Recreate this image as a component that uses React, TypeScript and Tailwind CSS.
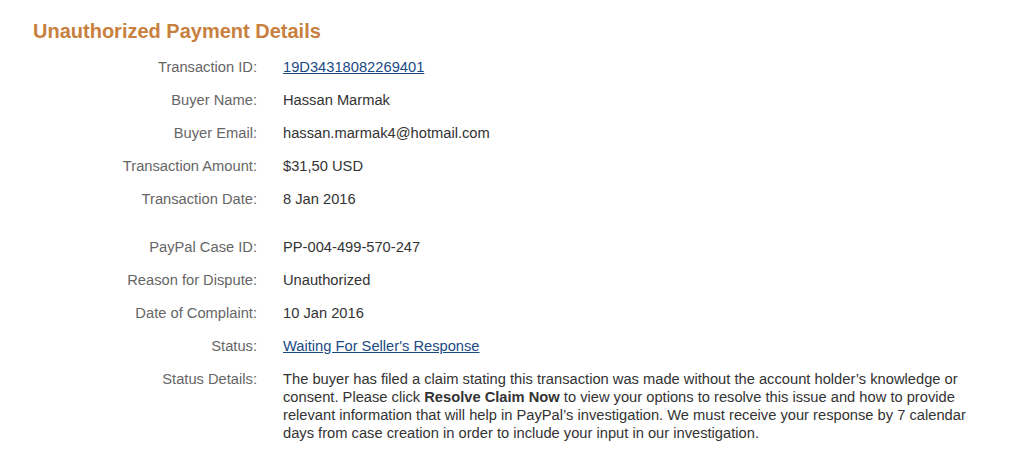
import React from "react";

const rows1: [string, React.ReactNode][] = [
  ["Transaction ID:", <a className="text-[#1a4a85] underline" href="#">19D34318082269401</a>],
  ["Buyer Name:", "Hassan Marmak"],
  ["Buyer Email:", "hassan.marmak4@hotmail.com"],
  ["Transaction Amount:", "$31,50 USD"],
  ["Transaction Date:", "8 Jan 2016"],
];

const rows2: [string, React.ReactNode][] = [
  ["PayPal Case ID:", "PP-004-499-570-247"],
  ["Reason for Dispute:", "Unauthorized"],
  ["Date of Complaint:", "10 Jan 2016"],
  ["Status:", <a className="text-[#1a4a85] underline" href="#">Waiting For Seller's Response</a>],
];

function Row({ label, value }: { label: string; value: React.ReactNode }) {
  return (
    <div className="flex items-start">
      <div className="w-[224px] shrink-0 text-right text-[#666666]">{label}</div>
      <div className="ml-[26px] text-[#333333]">{value}</div>
    </div>
  );
}

export default function App() {
  return (
    <div className="bg-white w-[1016px] h-[471px] pl-[33px] pt-[19px] text-[14.7px] leading-[18px]" style={{ fontFamily: '"Liberation Sans", Arial, sans-serif' }}>
      <h1 className="text-[20px] leading-[24px] font-bold text-[#c8803e]">Unauthorized Payment Details</h1>
      <div className="mt-[15px] flex flex-col gap-[15px]">
        {rows1.map(([l, v]) => <Row key={l} label={l} value={v} />)}
      </div>
      <div className="mt-[30px] flex flex-col gap-[15px]">
        {rows2.map(([l, v]) => <Row key={l} label={l} value={v} />)}
        <div className="flex items-start">
          <div className="w-[224px] shrink-0 text-right text-[#666666]">Status Details:</div>
          <div className="ml-[26px] w-[690px] text-[#333333]">
            The buyer has filed a claim stating this transaction was made without the account holder’s knowledge or consent. Please click <span className="font-bold">Resolve Claim Now</span> to view your options to resolve this issue and how to provide relevant information that will help in PayPal’s investigation. We must receive your response by 7 calendar days from case creation in order to include your input in our investigation.
          </div>
        </div>
      </div>
    </div>
  );
}
